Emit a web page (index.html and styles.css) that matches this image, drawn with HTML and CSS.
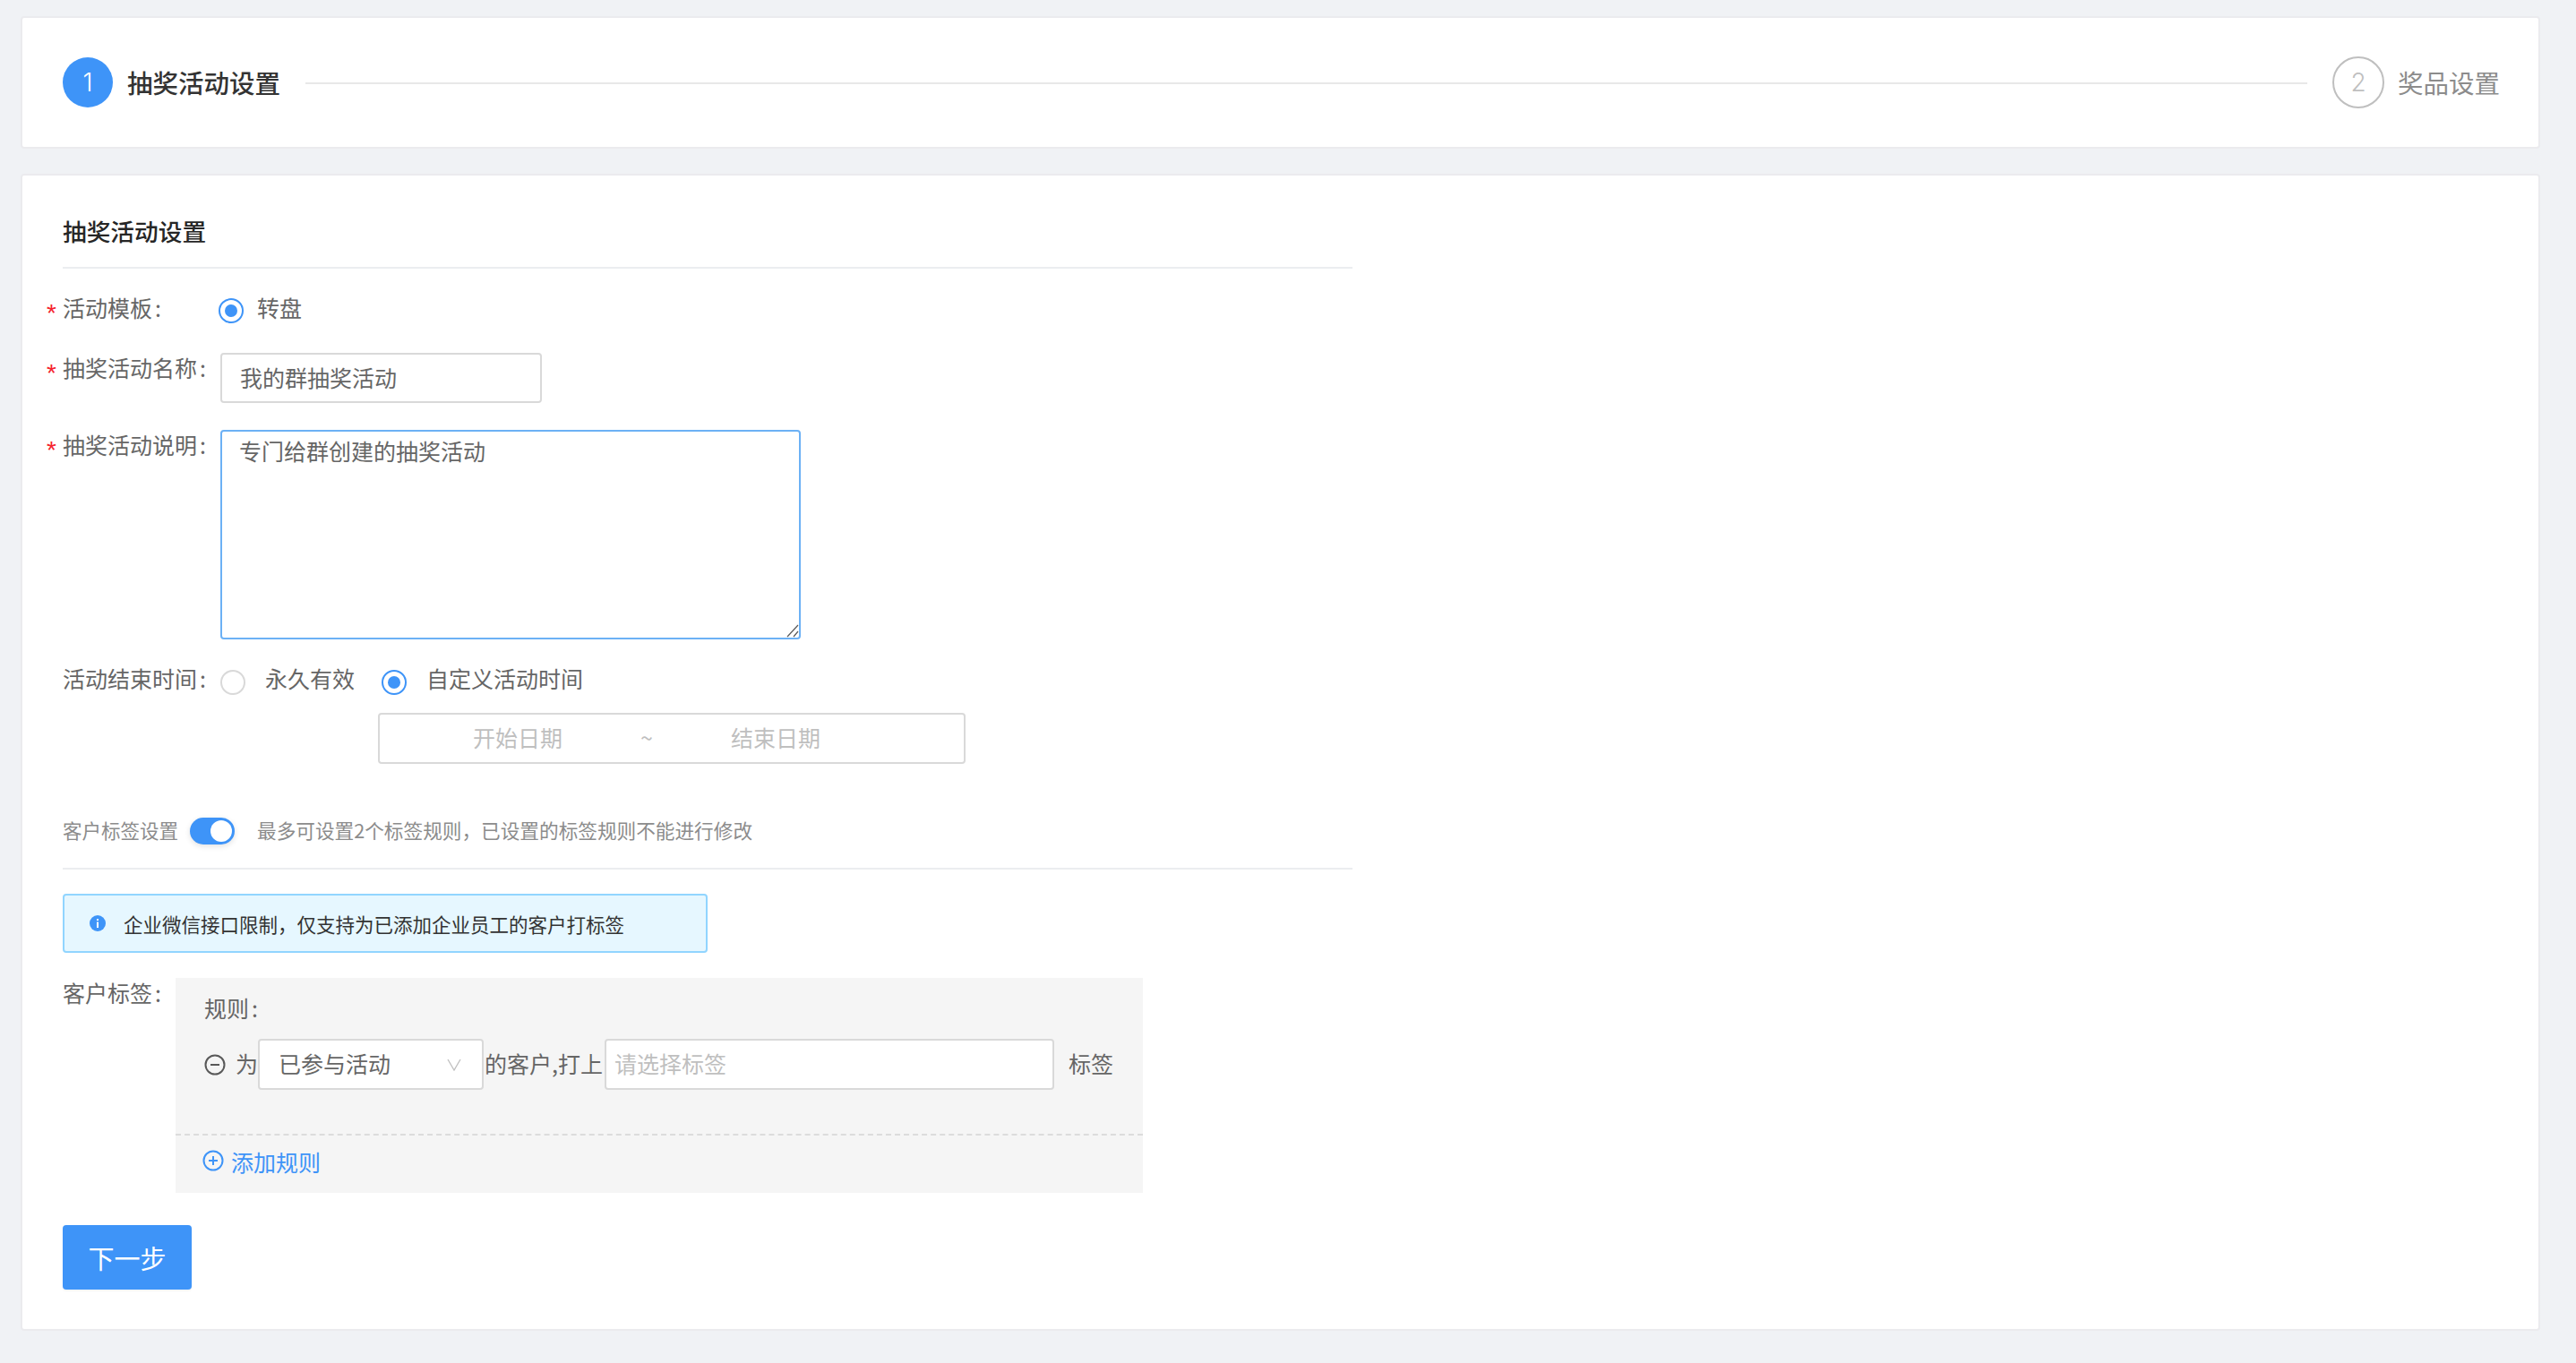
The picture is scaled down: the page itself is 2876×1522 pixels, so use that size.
FILE: index.html
```html
<!DOCTYPE html>
<html lang="zh-CN">
<head>
<meta charset="utf-8">
<title>抽奖活动设置</title>
<link rel="stylesheet" href="styles.css">
</head>
<body>
<section class="card steps">
  <div class="step">
    <span class="step-num step-num-on">1</span>
    <span class="step-text step-text-on">抽奖活动设置</span>
  </div>
  <div class="step-line"></div>
  <div class="step">
    <span class="step-num">2</span>
    <span class="step-text">奖品设置</span>
  </div>
</section>

<section class="card main">
  <h2 class="title">抽奖活动设置</h2>

  <div class="row row-template">
    <label class="label req">活动模板<span class="colon">:</span></label>
    <span class="radio on"></span>
    <span class="radio-text">转盘</span>
  </div>

  <div class="row row-top row-name">
    <label class="label req">抽奖活动名称<span class="colon">:</span></label>
    <input class="input name-input" value="我的群抽奖活动">
  </div>

  <div class="row row-top row-desc">
    <label class="label req">抽奖活动说明<span class="colon">:</span></label>
    <textarea class="textarea">专门给群创建的抽奖活动</textarea>
  </div>

  <div class="row row-end">
    <label class="label">活动结束时间<span class="colon">:</span></label>
    <span class="radio"></span>
    <span class="radio-text radio-text-a">永久有效</span>
    <span class="radio on"></span>
    <span class="radio-text radio-text-b">自定义活动时间</span>
  </div>

  <div class="date-range">
    <span class="date-ph">开始日期</span>
    <span class="date-sep">~</span>
    <span class="date-ph">结束日期</span>
  </div>

  <div class="tag-head">
    <span class="small">客户标签设置</span>
    <span class="switch"><span class="knob"></span></span>
    <span class="small tag-hint">最多可设置2个标签规则&#65292;已设置的标签规则不能进行修改</span>
  </div>

  <div class="alert">
    <svg class="alert-icon" viewBox="0 0 18 18"><circle cx="9" cy="9" r="9" fill="#3e94f8"/><rect x="8" y="7.5" width="2" height="6.5" fill="#fff"/><rect x="8" y="4" width="2" height="2" fill="#fff"/></svg>
    <span>企业微信接口限制&#65292;仅支持为已添加企业员工的客户打标签</span>
  </div>

  <div class="tags">
    <label class="label tags-label">客户标签<span class="colon">:</span></label>
    <div class="panel">
      <div class="panel-body">
        <div class="rule-title">规则<span class="colon">:</span></div>
        <div class="rule">
          <svg class="rule-icon" viewBox="0 0 24 24"><circle cx="12" cy="12" r="10.5" fill="none" stroke="#595959" stroke-width="2"/><rect x="7" y="11" width="10" height="2" fill="#595959"/></svg>
          <span class="rule-for">为</span>
          <div class="select">
            <span class="select-text">已参与活动</span>
            <svg class="chevron" viewBox="0 0 16 14"><path d="M1 1l7 12 7-12" fill="none" stroke="#bfbfbf" stroke-width="1.3"/></svg>
          </div>
          <span class="rule-mid">的客户,打上</span>
          <input class="input tag-input" placeholder="请选择标签">
          <span class="rule-end">标签</span>
        </div>
      </div>
      <div class="panel-foot">
        <svg class="add-icon" viewBox="0 0 24 24"><circle cx="12" cy="12" r="10.5" fill="none" stroke="#3e94f8" stroke-width="2"/><path d="M12 7v10M7 12h10" stroke="#3e94f8" stroke-width="2"/></svg>
        <span class="foot-text">添加规则</span>
      </div>
    </div>
  </div>

  <button class="next" type="button">下一步</button>
</section>
</body>
</html>
```
FILE: styles.css
```css
* { box-sizing: border-box; }
html, body { margin: 0; }
body {
  height: 1522px;
  padding: 18px 40px 0 23px;
  background: #f0f2f5;
  font-family: "Noto Sans CJK SC", "Noto Sans", sans-serif;
  font-size: 25px;
  font-weight: 400;
  color: #666;
  overflow: hidden;
}
.card {
  background: #fff;
  border: 2px solid #ebebee;
  border-radius: 4px;
}
.steps {
  height: 148px;
  padding: 0 43px 0 45px;
  display: flex;
  align-items: center;
}
.step { display: flex; align-items: center; }
.step-num {
  width: 58px;
  height: 58px;
  border: 2px solid #bfbfbf;
  border-radius: 50%;
  display: flex;
  align-items: center;
  justify-content: center;
  font-family: "Inter", sans-serif;
  font-size: 28px;
  font-weight: 300;
  color: #bfbfbf;
}
.step-num-on {
  width: 56px;
  height: 56px;
  background: #3e94f8;
  border: 0;
  color: #fff;
}
.step-text {
  margin-left: 15px;
  font-size: 28.5px;
  line-height: 40px;
  color: #8c8c8c;
}
.step-text-on { margin-left: 16px; color: #333; font-weight: 500; }
.step-line {
  flex: 1;
  height: 2px;
  margin: 2px 28px 0;
  background: #e8e8e8;
}

.main {
  margin-top: 28px;
  height: 1292px;
  padding: 42px 45px 0;
}
.title {
  width: 1440px;
  margin: 0;
  padding-bottom: 20px;
  border-bottom: 2px solid #ebedf0;
  font-size: 26.7px;
  line-height: 40px;
  font-weight: 500;
  color: #262626;
}
.row { display: flex; align-items: center; }
.row-top { align-items: flex-start; }
.row-template { margin-top: 27px; height: 40px; }
.row-name { margin-top: 27px; }
.row-desc { margin-top: 30px; }
.row-end { margin-top: 28px; height: 40px; }
.label {
  position: relative;
  flex: none;
  width: 176px;
  line-height: 33px;
  padding-bottom: 3px;
  white-space: nowrap;
}
.colon { margin-left: 3px; }
.req::before {
  content: "*";
  position: absolute;
  left: -18px;
  top: 7px;
  color: #f5222d;
  font-family: "Liberation Sans", sans-serif;
  font-size: 28px;
  line-height: 32px;
}
.radio {
  position: relative;
  flex: none;
  width: 28px;
  height: 28px;
  border: 2px solid #d9d9d9;
  border-radius: 50%;
  background: #fff;
}
.radio.on { border-color: #3e94f8; }
.radio.on::after {
  content: "";
  position: absolute;
  left: 5px;
  top: 5px;
  width: 14px;
  height: 14px;
  border-radius: 50%;
  background: #3e94f8;
}
.row-template .radio { margin-left: -2px; }
.radio-text { margin-left: 15px; line-height: 33px; }
.row-template .label, .row-template .radio-text { padding-bottom: 7px; }
.row-end .label, .row-end .radio-text { padding-bottom: 9px; }
.radio-text-a { margin-left: 22px; margin-right: 30px; }
.radio-text-b { margin-left: 22px; }
.input, .textarea {
  font: inherit;
  color: #666;
  background: #fff;
  border: 2px solid #d9d9d9;
  border-radius: 4px;
  outline: 0;
}
.input::placeholder { color: #bfbfbf; }
.name-input { width: 359px; height: 56px; padding: 0 19px 3px 20px; }
.textarea {
  display: block;
  width: 648px;
  height: 234px;
  padding: 3px 19px;
  line-height: 36px;
  border-color: #6cb1f5;
}
.textarea::-webkit-resizer {
  background: url("data:image/svg+xml,%3Csvg xmlns='http://www.w3.org/2000/svg' width='15' height='15'%3E%3Cpath d='M2 14L14 1M9 14l5-6' stroke='%23595959' stroke-width='1.2' fill='none'/%3E%3C/svg%3E") no-repeat;
}
.date-range {
  margin: 14px 0 0 352px;
  width: 656px;
  height: 57px;
  padding-bottom: 3px;
  border: 2px solid #d9d9d9;
  border-radius: 4px;
  display: flex;
  align-items: center;
  color: #bfbfbf;
}
.date-ph:first-child { margin-left: 104px; }
.date-sep { margin: 0 87px; font-size: 25px; }
.tag-head {
  width: 1440px;
  margin-top: 56px;
  height: 62px;
  padding-bottom: 22px;
  border-bottom: 2px solid #ebedf0;
  display: flex;
  align-items: center;
}
.small { font-size: 21.5px; color: #8c8c8c; white-space: nowrap; padding-bottom: 3px; }
.tag-hint { margin-left: 25px; font-size: 21.65px; }
.switch {
  position: relative;
  flex: none;
  margin-left: 13px;
  width: 50px;
  height: 30px;
  border-radius: 15px;
  background: #3e94f8;
  box-shadow: 0 2px 6px rgba(0,0,0,.12);
}
.knob {
  position: absolute;
  right: 3px;
  top: 3px;
  width: 24px;
  height: 24px;
  border-radius: 50%;
  background: #fff;
}
.alert {
  margin-top: 27px;
  width: 720px;
  height: 66px;
  padding-left: 28px;
  background: #e6f7ff;
  border: 2px solid #91d5ff;
  border-radius: 4px;
  display: flex;
  align-items: center;
  font-size: 21.5px;
  color: #333;
  white-space: nowrap;
}
.alert-icon { width: 18px; height: 18px; margin-right: 20px; flex: none; }
.tags { display: flex; margin-top: 28px; }
.tags-label { width: 126px; line-height: 32px; }
.panel { width: 1080px; height: 240px; background: #f5f5f5; }
.panel-body {
  height: 176px;
  padding: 15px 32px 0;
  border-bottom: 2px dashed #dcdcdc;
}
.rule-title { line-height: 37px; padding-bottom: 3px; }
.rule { margin-top: 13px; display: flex; align-items: center; height: 57px; white-space: nowrap; }
.rule-icon { width: 24px; height: 24px; flex: none; }
.rule-for { margin-left: 11px; width: 25px; padding-bottom: 3px; }
.select {
  width: 252px;
  height: 57px;
  padding: 0 23px 0 21px;
  background: #fff;
  border: 2px solid #d9d9d9;
  border-radius: 4px;
  display: flex;
  align-items: center;
  justify-content: space-between;
}
.select-text { padding-bottom: 3px; }
.chevron { width: 16px; height: 14px; }
.rule-mid { margin-left: 1px; width: 134px; padding-bottom: 3px; }
.tag-input { width: 502px; height: 57px; padding: 0 9px 3px; }
.rule-end { margin-left: 16px; padding-bottom: 3px; }
.panel-foot {
  height: 62px;
  padding: 0 0 4px 30px;
  display: flex;
  align-items: center;
  color: #3e94f8;
}
.add-icon { width: 24px; height: 24px; margin: 0 8px 2px 0; flex: none; }
.next {
  display: block;
  margin-top: 36px;
  width: 144px;
  height: 72px;
  border: 0;
  border-radius: 4px;
  background: #3e94f8;
  color: #fff;
  font: inherit;
  font-size: 29px;
  box-shadow: 0 2px 2px rgba(0,0,0,.04);
}
```
